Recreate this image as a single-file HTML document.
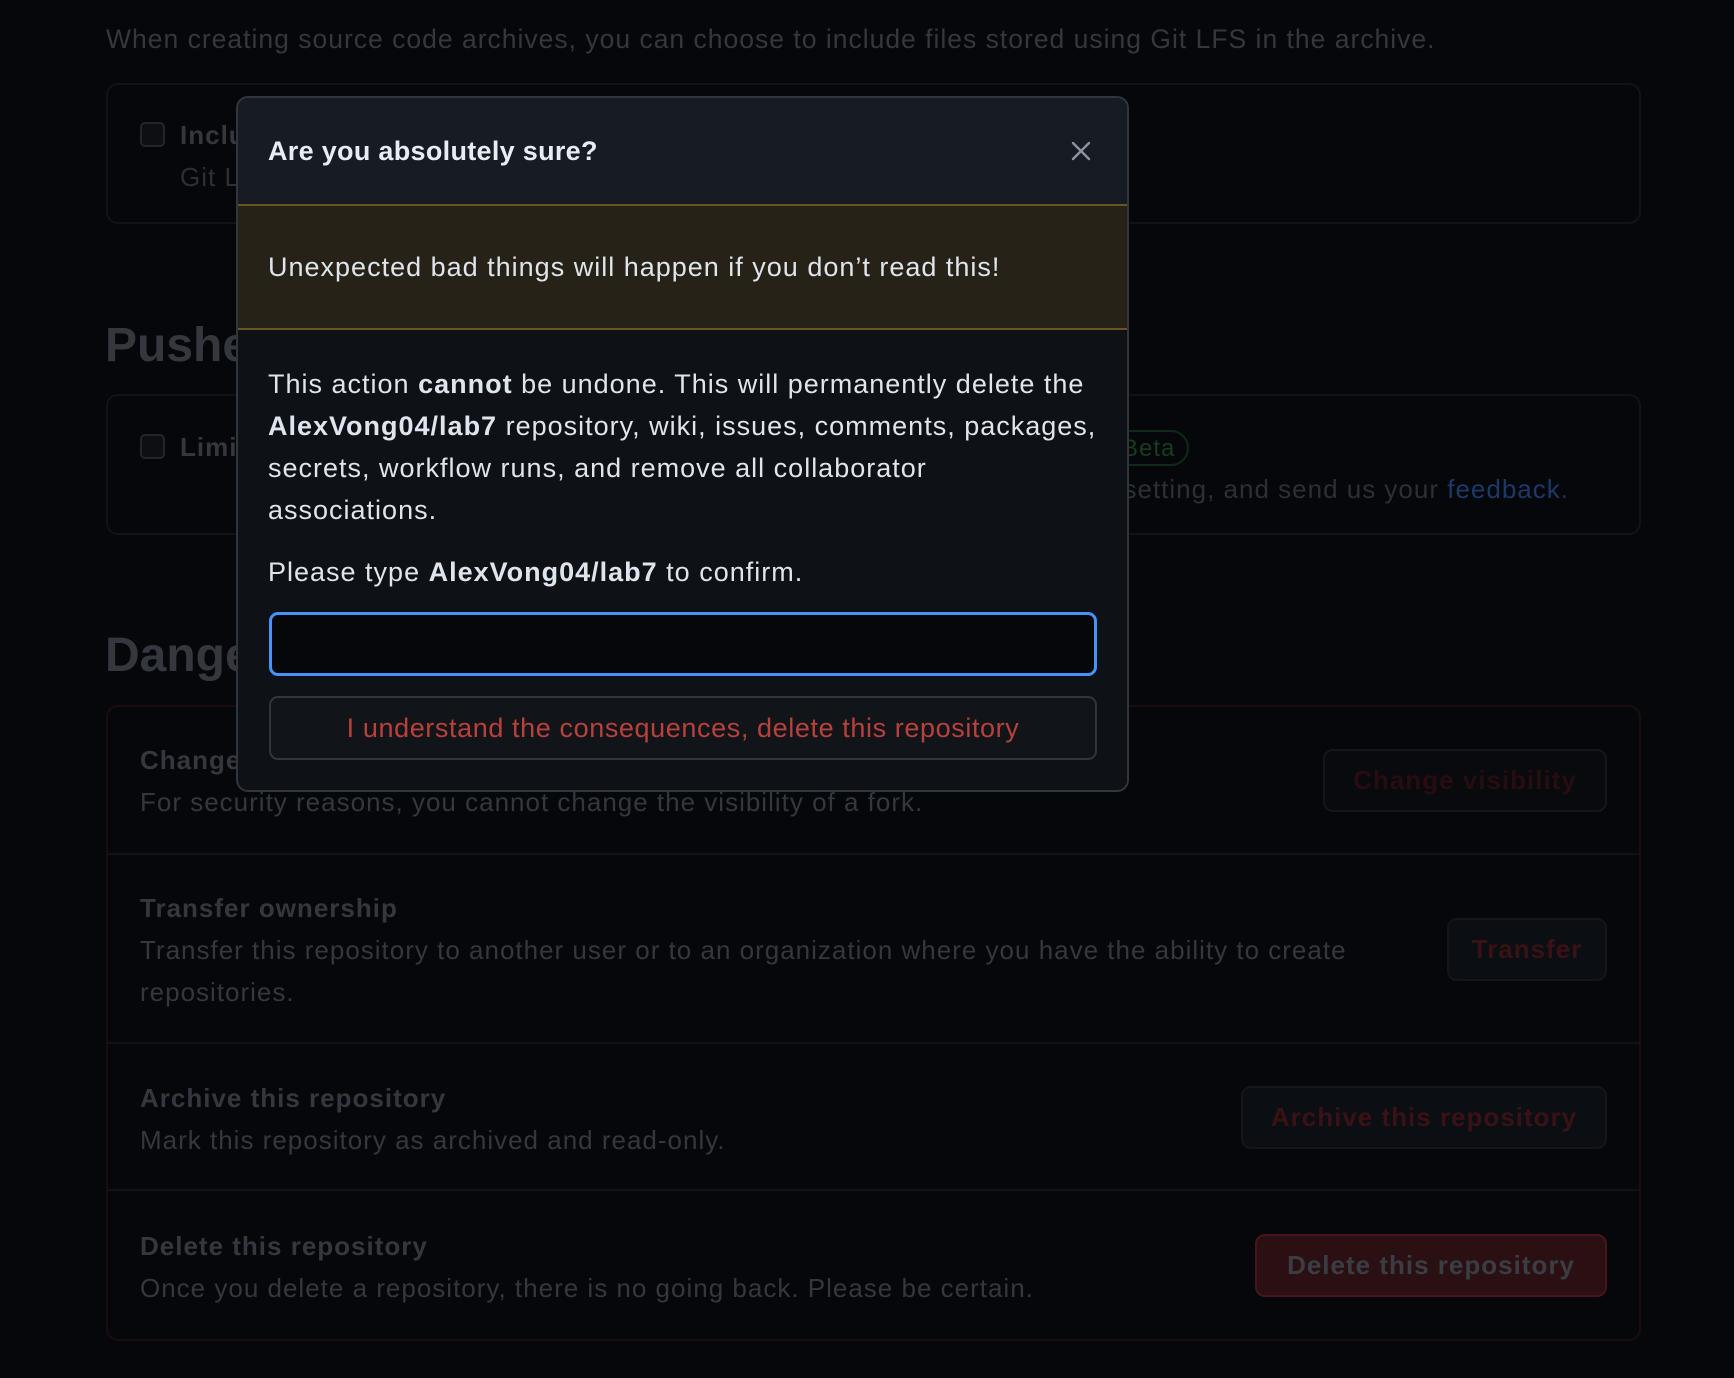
<!DOCTYPE html>
<html><head><meta charset="utf-8"><style>
*{box-sizing:border-box;margin:0;padding:0}
body{width:1734px;height:1378px;background:#05070a;font-family:"Liberation Sans",sans-serif;position:relative;overflow:hidden;color:#34383e;letter-spacing:1px}
.a{position:absolute;white-space:nowrap}
.box{position:absolute;border:2px solid #111317;border-radius:12px}
.cb{position:absolute;width:25px;height:25px;border:2px solid #22262b;border-radius:5px;background:#0d0f12}
.t{font-size:26px}
.b{font-weight:bold}
.btn{position:absolute;border:2px solid #13161a;border-radius:10px;background:#080a0d;font-size:26px;font-weight:bold;color:#3a1215;display:flex;align-items:center;justify-content:center}
.row{position:absolute;left:108px;height:2px;background:#101216;width:1532px}
.modal{position:absolute;left:236px;top:96px;width:893px;height:696px;border:2px solid #30363d;border-radius:12px;background:#0e1116;overflow:hidden}
.mt{color:#dfe5ec;font-size:27px;line-height:42px}
</style></head><body>
<div class="a t" style="left:106px;top:24px;color:#34383e;font-size:26.5px">When creating source code archives, you can choose to include files stored using Git LFS in the archive.</div>
<div class="box" style="left:106px;top:83px;width:1535px;height:141px"></div>
<div class="cb" style="left:140px;top:122px"></div>
<div class="a t b" style="left:180px;top:120px">Include Git LFS objects in archives</div>
<div class="a t" style="left:180px;top:162px;color:#2c3036">Git LFS usage in archives is billed at the same rate as usage with the client.</div>
<div class="a b" style="left:105px;top:318px;font-size:48px;color:#34383e;letter-spacing:0">Pushes</div>
<div class="box" style="left:106px;top:394px;width:1535px;height:141px"></div>
<div class="cb" style="left:140px;top:434px"></div>
<div class="a t b" style="left:180px;top:432px">Limit how many branches and tags can be updated in a single push</div>
<div class="a" style="left:1108px;top:430px;width:81px;height:36px;border:2px solid #0f2a16;border-radius:18px;color:#173d20;font-size:24px;padding:3px 0 0 12px">Beta</div>
<div class="a t" style="right:165px;top:474px;color:#2c3036">Pushes will be rejected if they attempt to update more than this setting, and send us your <span style="color:#1a3a6a">feedback</span>.</div>
<div class="a b" style="left:105px;top:628px;font-size:48px;color:#34383e;letter-spacing:0">Danger Zone</div>
<div class="box" style="left:106px;top:705px;width:1535px;height:636px;border-color:#1a0d10"></div>
<div class="row" style="top:853px"></div>
<div class="row" style="top:1042px"></div>
<div class="row" style="top:1189px"></div>
<div class="a t b" style="left:140px;top:745px">Change repository visibility</div>
<div class="a t" style="left:140px;top:787px">For security reasons, you cannot change the visibility of a fork.</div>
<div class="btn" style="left:1323px;top:749px;width:284px;height:63px;color:#280d10">Change visibility</div>
<div class="a t b" style="left:140px;top:893px">Transfer ownership</div>
<div class="a t" style="left:140px;top:935px">Transfer this repository to another user or to an organization where you have the ability to create</div>
<div class="a t" style="left:140px;top:977px">repositories.</div>
<div class="btn" style="left:1447px;top:918px;width:160px;height:63px;background:#0b0e12">Transfer</div>
<div class="a t b" style="left:140px;top:1083px">Archive this repository</div>
<div class="a t" style="left:140px;top:1125px">Mark this repository as archived and read-only.</div>
<div class="btn" style="left:1241px;top:1086px;width:366px;height:63px;background:#0b0e12">Archive this repository</div>
<div class="a t b" style="left:140px;top:1231px">Delete this repository</div>
<div class="a t" style="left:140px;top:1273px">Once you delete a repository, there is no going back. Please be certain.</div>
<div class="btn" style="left:1255px;top:1234px;width:352px;height:63px;background:#2a1013;border-color:#481519;color:#3a3d44">Delete this repository</div>

<div class="modal">
 <div style="position:absolute;left:0;top:0;width:100%;height:108px;background:#171b22"></div>
 <div class="a b" style="left:30px;top:38px;font-size:27px;color:#e6edf3;letter-spacing:0.3px">Are you absolutely sure?</div>
 <svg class="a" style="left:832px;top:42px" width="22" height="22" viewBox="0 0 22 22"><path d="M3 3L19 19M19 3L3 19" stroke="#8b949e" stroke-width="2.4" stroke-linecap="round"/></svg>
 <div style="position:absolute;left:0;top:106px;width:100%;height:126px;background:#272218;border-top:2px solid #6b5420;border-bottom:2px solid #6b5420"></div>
 <div class="a mt" style="left:30px;top:148px">Unexpected bad things will happen if you don’t read this!</div>
 <div class="a mt" style="left:30px;top:265px;white-space:normal;width:830px">This action <b>cannot</b> be undone. This will permanently delete the <b>AlexVong04/lab7</b> repository, wiki, issues, comments, packages, secrets, workflow runs, and remove all collaborator associations.</div>
 <div class="a mt" style="left:30px;top:453px">Please type <b>AlexVong04/lab7</b> to confirm.</div>
 <div class="a" style="left:31px;top:514px;width:828px;height:64px;border:3px solid #4493f8;border-radius:9px;background:#05070a"></div>
 <div class="a" style="left:31px;top:598px;width:828px;height:64px;border:2px solid #30363d;border-radius:9px;background:#11151a;color:#b9403b;font-size:27px;letter-spacing:0.6px;display:flex;align-items:center;justify-content:center">I understand the consequences, delete this repository</div>
</div>
</body></html>
